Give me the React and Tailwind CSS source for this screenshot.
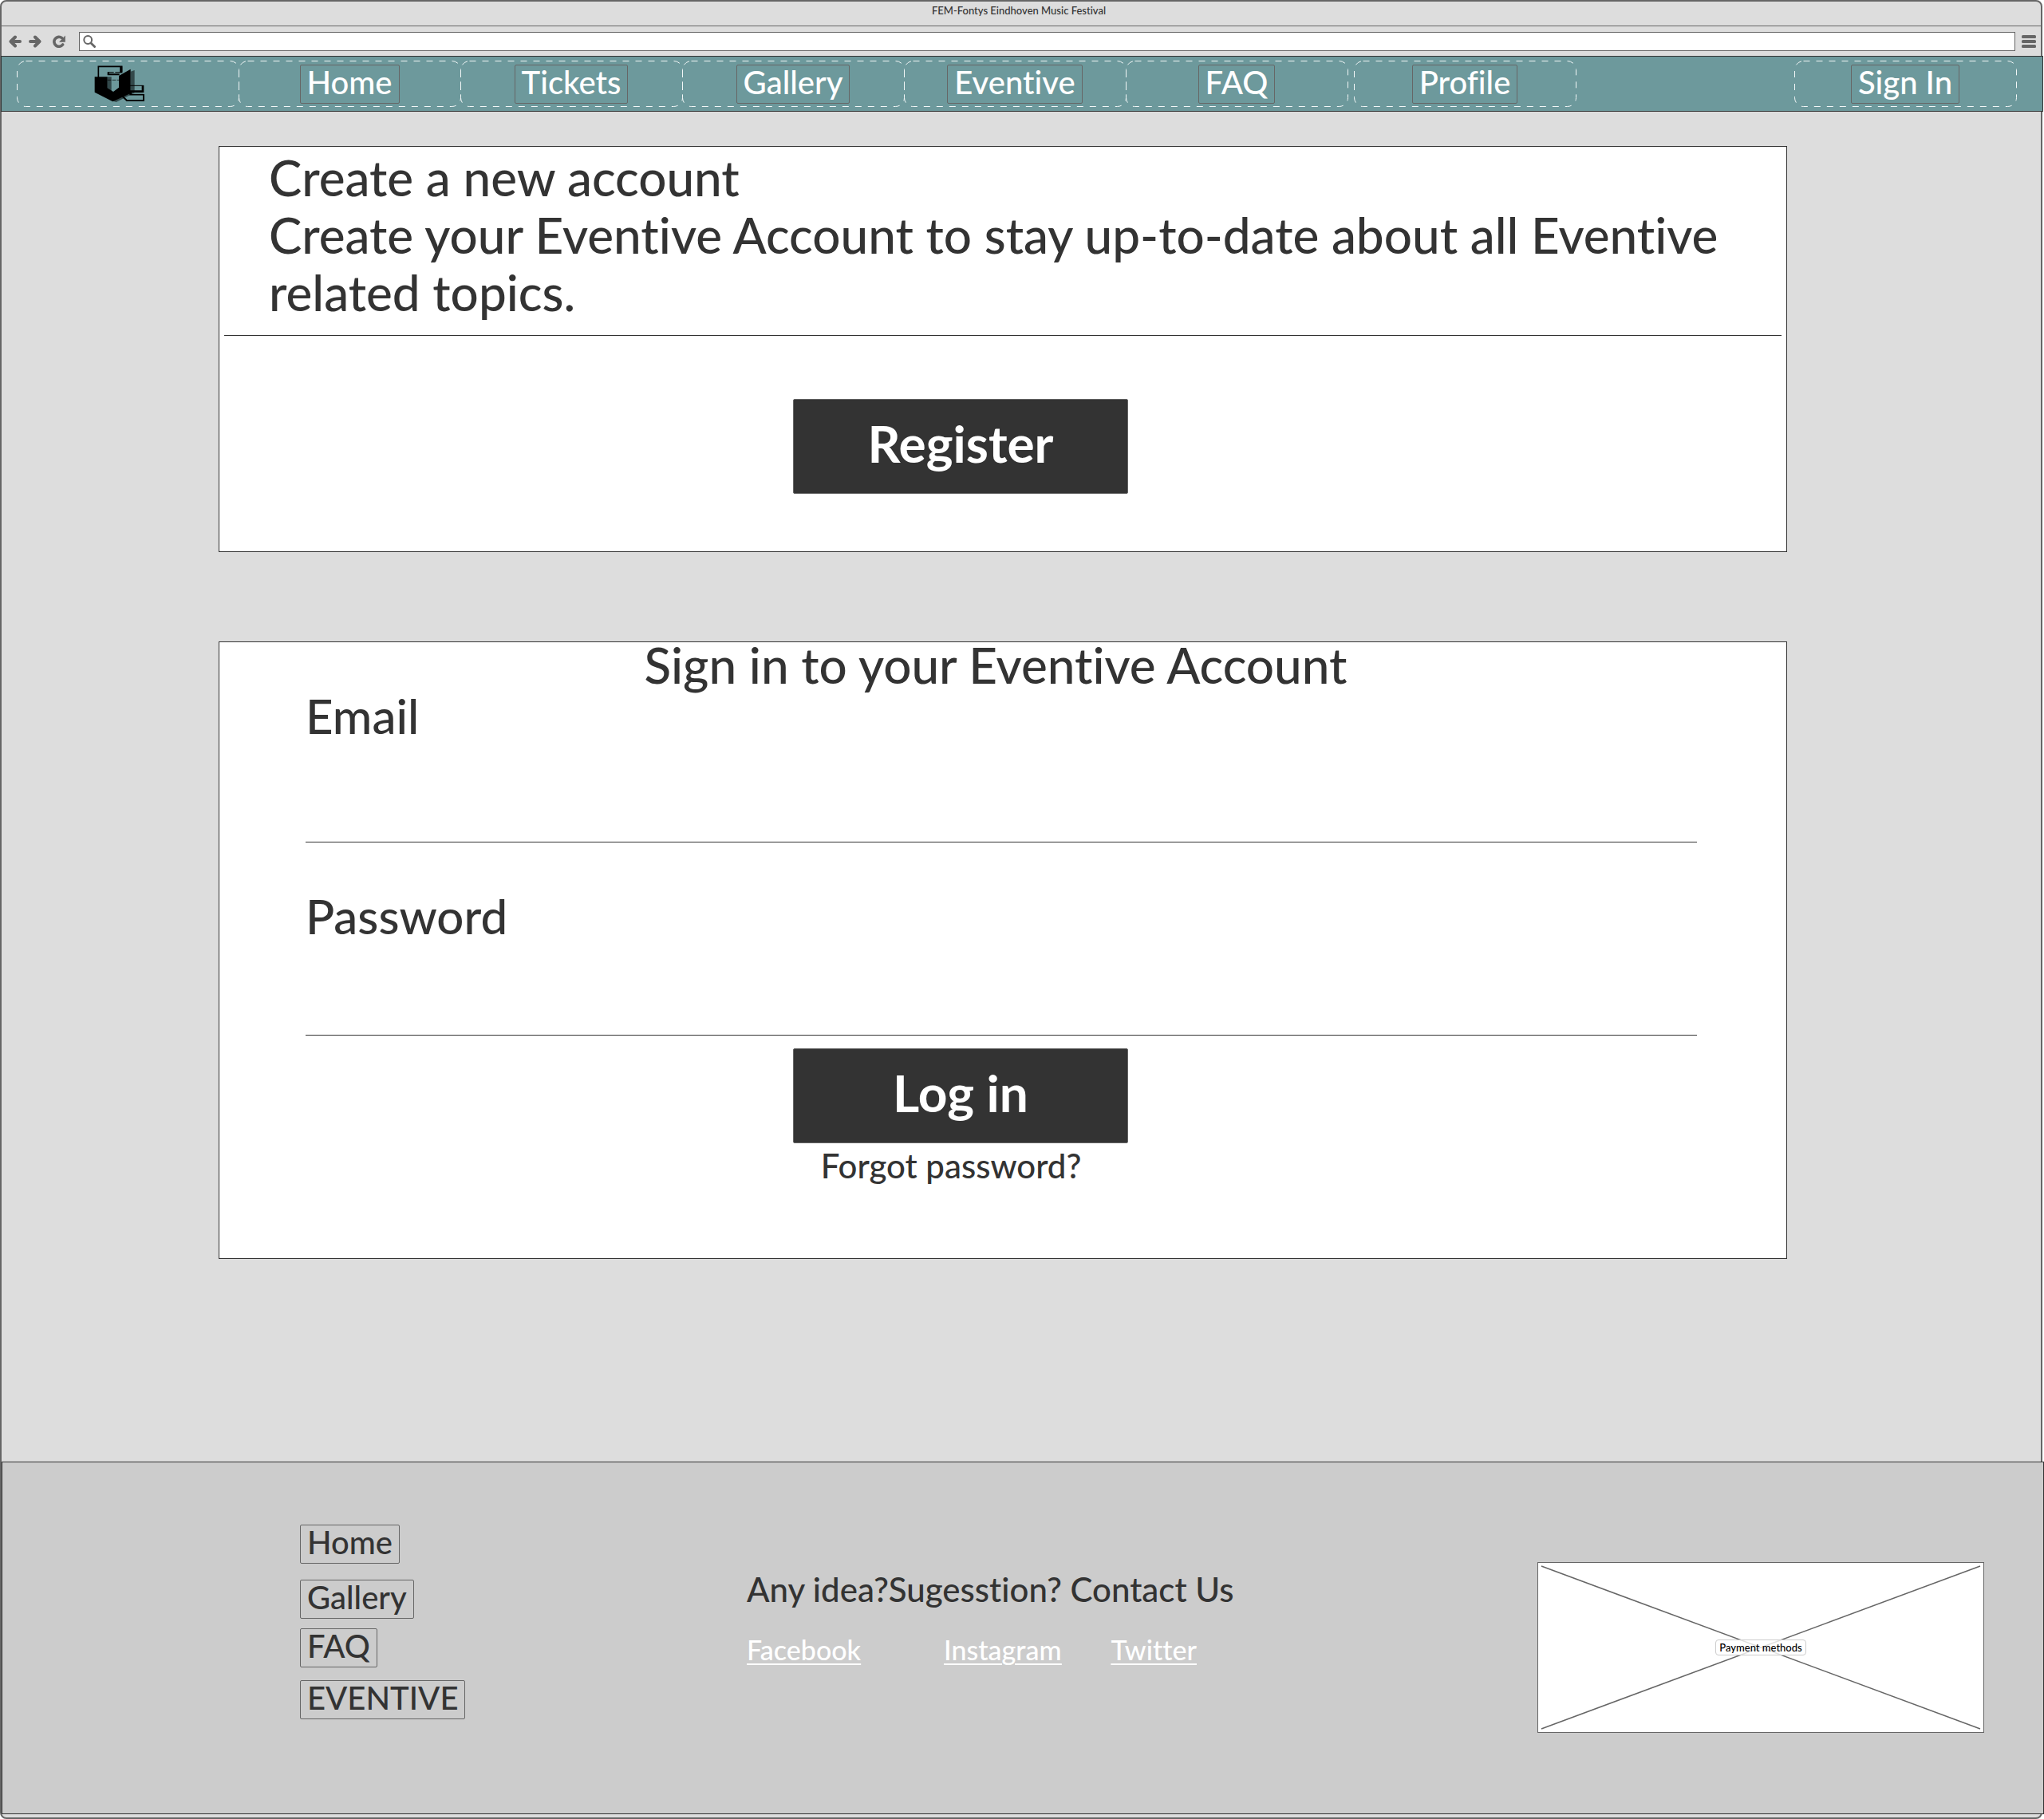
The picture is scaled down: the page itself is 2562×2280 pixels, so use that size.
import React from "react";

const navItems = ["Home", "Tickets", "Gallery", "Eventive", "FAQ"];

const footerLinks = [
  { label: "Home", gap: "" },
  { label: "Gallery", gap: "mt-5" },
  { label: "FAQ", gap: "mt-3" },
  { label: "EVENTIVE", gap: "mt-4" },
];

function ArrowIcon({ flip }) {
  return (
    <svg viewBox="0 0 16 16" className={flip ? "h-4 w-4 -scale-x-100" : "h-4 w-4"} fill="none" stroke="#666666" strokeWidth="4" strokeLinecap="round" strokeLinejoin="round">
      <path d="M8 2.5 2.5 8 8 13.5M3 8h11" />
    </svg>
  );
}

function ReloadIcon() {
  return (
    <svg viewBox="0 0 16 16" className="h-4 w-4" fill="none" stroke="#666666" strokeWidth="3.6" strokeLinecap="round">
      <path d="M11.6 3.6A6 6 0 1 0 12.6 12" />
      <path d="M15.8 .5v8.300H8z" fill="#666666" stroke="none" />
    </svg>
  );
}

function SearchIcon() {
  return (
    <svg viewBox="0 0 16 16" className="h-4 w-4 shrink-0" fill="none" stroke="#666666" strokeLinecap="round">
      <circle cx="6.2" cy="6" r="4.9" strokeWidth="2" />
      <path d="M10 10l4.600 4.600" strokeWidth="2.8" />
    </svg>
  );
}

function MenuIcon() {
  return (
    <svg viewBox="0 0 18 16" className="h-4 w-[18px]" fill="#666666">
      <rect width="18" height="4" rx="1.5" />
      <rect y="6" width="18" height="4" rx="1.5" />
      <rect y="12" width="18" height="4" rx="1.5" />
    </svg>
  );
}

function Logo() {
  return (
    <svg viewBox="55 39 255 141" className="h-[47px] w-[85px]" fill="none" stroke="#000000">
      <path d="M192 62 207 57V142L138 177 122 172 192 140zM105 82h15v54l-15-12z" fill="#33494b" stroke="none" />
      <path d="M57 82h48v42l22 14 21-16V78l44-25v91l-67 31-68-35z" fill="#000000" stroke="none" />
      <path d="M71 84V43h88v22" strokeWidth="5" />
      <path d="M156 43v24" strokeWidth="9" />
      <path d="M160 65H108" strokeWidth="3" strokeDasharray="26 5" />
      <path d="M108 64v9h42" strokeWidth="6" />
      <path d="M105 94h43" strokeWidth="2" strokeDasharray="14 4" />
      <path d="M190 115h50" strokeWidth="3" />
      <path d="M238 114v23h-46v10" strokeWidth="8" />
      <path d="M188 149h54" strokeWidth="5" />
      <path d="M241 147v24h-63l-18-17" strokeWidth="6" />
    </svg>
  );
}

function NavCell({ children, className }) {
  return (
    <div className={`relative flex h-[58px] max-w-[278px] flex-1 items-center justify-center ${className || ""}`}>
      <svg className="pointer-events-none absolute inset-0 h-full w-full overflow-visible" fill="none" stroke="#f2f7f7" strokeDasharray="8 8" aria-hidden="true">
        <rect x="0.5" y="0.5" width="100%" height="57" rx="11" />
      </svg>
      {children}
    </div>
  );
}

function BoxLink({ children }) {
  return (
    <a href="#" className="relative block rounded-xs border border-[#666666] px-2 pb-1 text-[40px] leading-[43px] whitespace-nowrap">
      {children}
    </a>
  );
}

function Field({ id, label, type, className }) {
  return (
    <div className="pr-[112px] pl-[108px]">
      <label htmlFor={id} className="block text-[60px]">{label}</label>
      <input id={id} type={type} className={`block w-full border-b border-[#333333] bg-transparent outline-none ${className}`} />
    </div>
  );
}

function BigButton({ children }) {
  return (
    <button type="button" className="h-[119px] w-[420px] rounded-xs border border-[#666666] bg-[#333333] pb-2 text-[64px] font-bold text-white">
      {children}
    </button>
  );
}

export default function App() {
  return (
    <div className="mr-0.5 flex min-h-screen flex-col rounded-lg border-2 border-[#666666] bg-[#dddddd] font-['Lato',sans-serif] font-medium text-[#333333] [font-variant-ligatures:none]">
      <header>
        <div className="h-[31px] border-b border-[#666666] pr-1.5 text-center text-[13px] leading-[23px]">FEM-Fontys Eindhoven Music Festival</div>
        <div className="flex h-[37px] items-center pt-px pr-1.5 pl-[9px]">
          <button type="button" aria-label="Back"><ArrowIcon /></button>
          <button type="button" aria-label="Forward" className="ml-[9px]"><ArrowIcon flip /></button>
          <button type="button" aria-label="Reload" className="mr-[17px] ml-[14px]"><ReloadIcon /></button>
          <label className="flex h-6 flex-1 items-center border border-[#666666] bg-white px-1">
            <SearchIcon />
            <input type="text" aria-label="Address" className="ml-2 min-w-0 flex-1 text-[13px] outline-none" />
          </label>
          <button type="button" aria-label="Menu" className="ml-2"><MenuIcon /></button>
        </div>
      </header>

      <nav className="-mr-[3px] -ml-px flex h-[70px] items-center border border-[#333333] bg-[#6d999c] pr-[33px] pl-[19px] text-white">
        <NavCell><a href="#" aria-label="Eventive home"><Logo /></a></NavCell>
        {navItems.map((item) => (
          <NavCell key={item}><BoxLink>{item}</BoxLink></NavCell>
        ))}
        <NavCell className="ml-2"><BoxLink>Profile</BoxLink></NavCell>
        <NavCell className="ml-auto"><BoxLink>Sign In</BoxLink></NavCell>
      </nav>

      <main className="flex-1 pt-[43px] pr-[318px] pl-68 text-[62px] leading-[72px]">
        <section className="border border-[#333333] bg-white pt-0.5 pb-[72px]">
          <div className="pr-4 pl-[62px]">
            <h1>Create a new account</h1>
            <p>Create your Eventive Account to stay up-to-date about all Eventive related topics.</p>
          </div>
          <hr className="mx-[6px] mt-[18px] border-[#333333]" />
          <div className="flex justify-center pt-[79px] pr-[106px]">
            <BigButton>Register</BigButton>
          </div>
        </section>

        <section className="mt-28 border border-[#333333] bg-white pb-[92px]">
          <form>
            <h2 className="pr-[18px] text-center leading-[56px]">Sign in to your Eventive Account</h2>
            <Field id="email" label="Email" type="email" className="h-[123px]" />
            <div className="mt-14">
              <Field id="password" label="Password" type="password" className="h-[114px]" />
            </div>
            <div className="flex justify-center pt-4 pr-[106px]">
              <BigButton>Log in</BigButton>
            </div>
            <p className="pt-1 pr-[130px] text-center text-[42px] leading-[48px]"><a href="#">Forgot password?</a></p>
          </form>
        </section>
      </main>

      <footer className="-mr-1 mb-1 flex h-[442px] border border-[#333333] bg-[#cccccc] pr-[74px] pl-[373px]">
        <ul className="flex w-[560px] flex-col items-start pt-[78px]">
          {footerLinks.map(({ label, gap }) => (
            <li key={label} className={gap}><BoxLink>{label}</BoxLink></li>
          ))}
        </ul>
        <div className="flex-1 pt-[135px]">
          <p className="text-[42px] leading-[48px]">Any idea?Sugesstion? Contact Us</p>
          <div className="mt-8 flex text-[34px] leading-[40px] text-white underline decoration-2 underline-offset-4">
            <a href="#" className="mr-[104px]">Facebook</a>
            <a href="#" className="mr-[62px]">Instagram</a>
            <a href="#">Twitter</a>
          </div>
        </div>
        <div className="relative mt-[125px] flex h-[214px] w-[560px] items-center justify-center border border-[#666666] bg-white">
          <svg viewBox="0 0 558 212" preserveAspectRatio="none" className="absolute inset-0 h-full w-full" stroke="#666666" strokeWidth="1.5">
            <path d="M4 4 554 208M554 4 4 208" />
          </svg>
          <span className="relative rounded-sm border border-[#cccccc] bg-white/80 px-1 text-[13px] leading-[18px] text-black">Payment methods</span>
        </div>
      </footer>
    </div>
  );
}
